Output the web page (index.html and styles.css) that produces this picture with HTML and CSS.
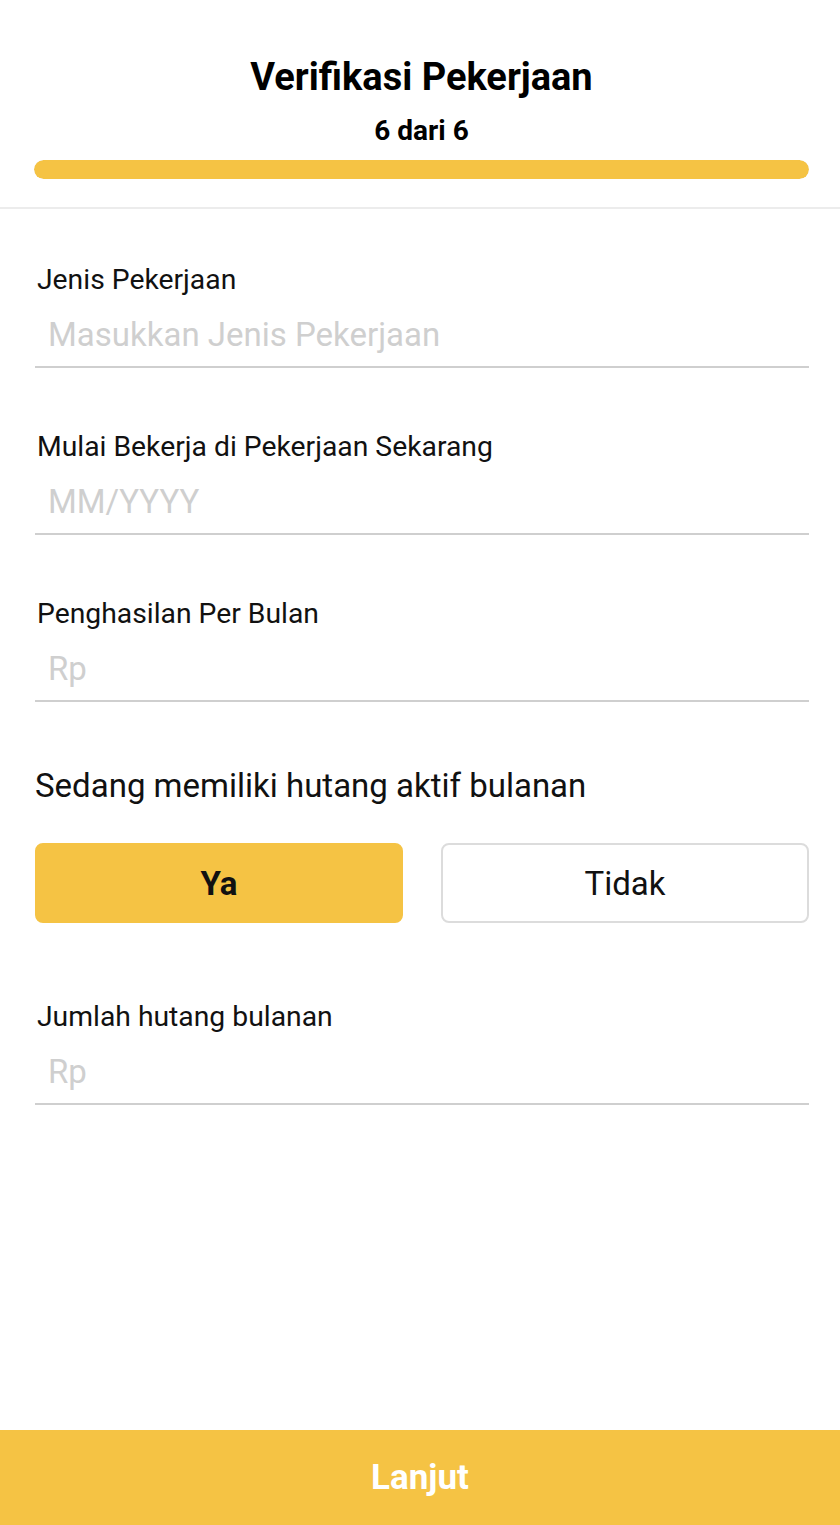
FILE: index.html
```html
<!DOCTYPE html>
<html lang="id">
<head>
<meta charset="utf-8">
<title>Verifikasi Pekerjaan</title>
<link rel="stylesheet" href="styles.css">
</head>
<body>
<div class="page">
  <header class="header">
    <h1 class="title">Verifikasi Pekerjaan</h1>
    <div class="step">6 dari 6</div>
    <div class="progress"><div class="progress-fill"></div></div>
  </header>
  <main class="form">
    <div class="field">
      <label class="label">Jenis Pekerjaan</label>
      <div class="input">Masukkan Jenis Pekerjaan</div>
    </div>
    <div class="field">
      <label class="label">Mulai Bekerja di Pekerjaan Sekarang</label>
      <div class="input">MM/YYYY</div>
    </div>
    <div class="field">
      <label class="label">Penghasilan Per Bulan</label>
      <div class="input">Rp</div>
    </div>
    <div class="question">Sedang memiliki hutang aktif bulanan</div>
    <div class="choices">
      <button class="choice choice-active">Ya</button>
      <button class="choice">Tidak</button>
    </div>
    <div class="field field-last">
      <label class="label">Jumlah hutang bulanan</label>
      <div class="input">Rp</div>
    </div>
  </main>
  <footer class="footer">
    <button class="next">Lanjut</button>
  </footer>
</div>
</body>
</html>
```

FILE: styles.css
```css
* { box-sizing: border-box; }
html, body { margin: 0; padding: 0; background: #fff; }
body { font-family: Roboto, "Noto Sans", sans-serif; color: #111; }
.page {
  width: 840px;
  height: 1525px;
  display: flex;
  flex-direction: column;
}
.header {
  padding: 55px 31px 28px 34px;
  border-bottom: 2px solid #ececec;
  display: flex;
  flex-direction: column;
  align-items: center;
}
.title {
  margin: 0;
  font-size: 38px;
  font-weight: 700;
  line-height: 44px;
  color: #000;
}
.step {
  margin-top: 15px;
  font-size: 28px;
  font-weight: 700;
  line-height: 34px;
  color: #000;
}
.progress {
  margin-top: 12px;
  width: 100%;
  height: 19px;
  border-radius: 10px;
  background: #eee;
  overflow: hidden;
}
.progress-fill {
  width: 100%;
  height: 100%;
  background: #f5c344;
  border-radius: 10px;
}
.form {
  flex: 1;
  padding: 54px 31px 0 35px;
  display: flex;
  flex-direction: column;
}
.field {
  display: flex;
  flex-direction: column;
  margin-bottom: 62px;
}
.label {
  padding-left: 2px;
  font-size: 28.3px;
  line-height: 34px;
  color: #111;
}
.input {
  margin-top: 18px;
  padding: 0 0 11px 13px;
  font-size: 33px;
  line-height: 40px;
  color: #cfcfcf;
  border-bottom: 2px solid #cfcfcf;
}
.question {
  margin-top: 2px;
  font-size: 33px;
  line-height: 40px;
  color: #111;
}
.choices {
  margin-top: 37px;
  display: grid;
  grid-template-columns: 1fr 1fr;
  gap: 38px;
  margin-bottom: 77px;
}
.choice {
  height: 80px;
  border-radius: 8px;
  border: 2px solid #dcdcdc;
  background: #fff;
  font-family: inherit;
  font-size: 33px;
  color: #111;
  padding: 0;
}
.choice-active {
  background: #f5c344;
  border-color: #f5c344;
  font-weight: 700;
}
.footer {
  height: 95px;
  background: #f5c344;
}
.next {
  width: 100%;
  height: 100%;
  border: 0;
  background: transparent;
  font-family: inherit;
  font-size: 35px;
  font-weight: 700;
  color: #fff;
}
```
